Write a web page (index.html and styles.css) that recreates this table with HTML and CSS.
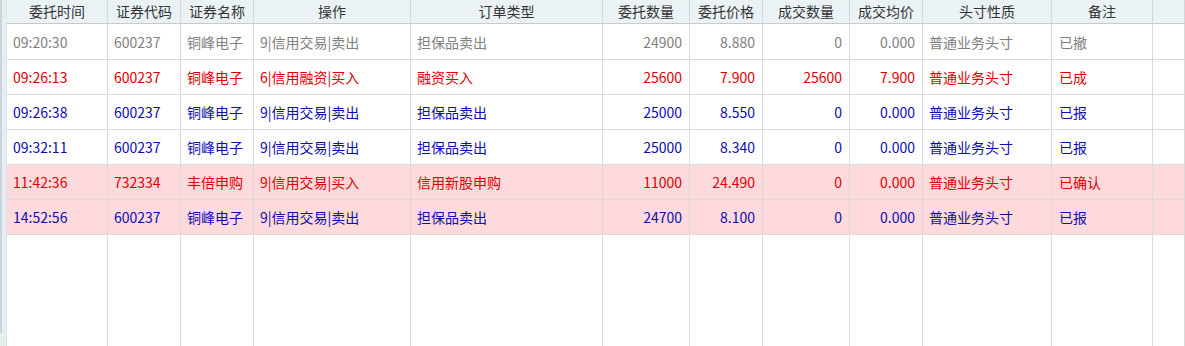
FILE: index.html
```html
<!DOCTYPE html>
<html lang="zh-CN">
<head>
<meta charset="utf-8">
<title>委托查询</title>
<link rel="stylesheet" href="styles.css">
</head>
<body>
<div class="page">
  <div class="side"><div class="side-bar"></div><div class="side-fill"></div></div>
  <div class="grid">
    <div class="h">委托时间</div><div class="h">证券代码</div><div class="h">证券名称</div><div class="h">操作</div><div class="h">订单类型</div><div class="h">委托数量</div><div class="h">委托价格</div><div class="h">成交数量</div><div class="h">成交均价</div><div class="h">头寸性质</div><div class="h">备注</div><div class="h"></div>

    <div class="c gray">09:20:30</div><div class="c gray">600237</div><div class="c gray">铜峰电子</div><div class="c gray">9|信用交易|卖出</div><div class="c gray">担保品卖出</div><div class="c r gray">24900</div><div class="c r gray">8.880</div><div class="c r gray">0</div><div class="c r gray">0.000</div><div class="c gray">普通业务头寸</div><div class="c gray n">已撤</div><div class="c"></div>

    <div class="c red">09:26:13</div><div class="c red">600237</div><div class="c red">铜峰电子</div><div class="c red">6|信用融资|买入</div><div class="c red">融资买入</div><div class="c r red">25600</div><div class="c r red">7.900</div><div class="c r red">25600</div><div class="c r red">7.900</div><div class="c red">普通业务头寸</div><div class="c red n">已成</div><div class="c"></div>

    <div class="c blue">09:26:38</div><div class="c blue">600237</div><div class="c blue">铜峰电子</div><div class="c blue">9|信用交易|卖出</div><div class="c blue">担保品卖出</div><div class="c r blue">25000</div><div class="c r blue">8.550</div><div class="c r blue">0</div><div class="c r blue">0.000</div><div class="c blue">普通业务头寸</div><div class="c blue n">已报</div><div class="c"></div>

    <div class="c blue">09:32:11</div><div class="c blue">600237</div><div class="c blue">铜峰电子</div><div class="c blue">9|信用交易|卖出</div><div class="c blue">担保品卖出</div><div class="c r blue">25000</div><div class="c r blue">8.340</div><div class="c r blue">0</div><div class="c r blue">0.000</div><div class="c blue">普通业务头寸</div><div class="c blue n">已报</div><div class="c"></div>

    <div class="c pk red">11:42:36</div><div class="c pk red">732334</div><div class="c pk red">丰倍申购</div><div class="c pk red">9|信用交易|买入</div><div class="c pk red">信用新股申购</div><div class="c pk r red">11000</div><div class="c pk r red">24.490</div><div class="c pk r red">0</div><div class="c pk r red">0.000</div><div class="c pk red">普通业务头寸</div><div class="c pk red n">已确认</div><div class="c pk"></div>

    <div class="c pk blue">14:52:56</div><div class="c pk blue">600237</div><div class="c pk blue">铜峰电子</div><div class="c pk blue">9|信用交易|卖出</div><div class="c pk blue">担保品卖出</div><div class="c pk r blue">24700</div><div class="c pk r blue">8.100</div><div class="c pk r blue">0</div><div class="c pk r blue">0.000</div><div class="c pk blue">普通业务头寸</div><div class="c pk blue n">已报</div><div class="c pk"></div>

    <div class="f"></div><div class="f"></div><div class="f"></div><div class="f"></div><div class="f"></div><div class="f"></div><div class="f"></div><div class="f"></div><div class="f"></div><div class="f"></div><div class="f"></div><div class="f"></div>
  </div>
</div>
</body>
</html>
```
FILE: styles.css
```css
html, body {
  margin: 0;
  padding: 0;
  height: 100%;
  background: #ffffff;
  overflow: hidden;
}
body {
  font-family: "Noto Sans CJK SC", "Noto Sans", "DejaVu Sans", sans-serif;
  font-size: 14px;
}
.page {
  display: flex;
  height: 346px;
}
.side {
  width: 7px;
  display: flex;
  flex-shrink: 0;
  background: #e7eef2;
}
.side-bar {
  width: 2px;
  height: 333px;
  background: #cdd4d9;
}
.side-fill {
  flex: 1;
  border-right: 1px solid #dde4e8;
}
.grid {
  flex: 1;
  display: grid;
  grid-template-columns: 101px 73px 73px 157px 192px 87px 73px 87px 73px 129px 101px 1fr;
  grid-template-rows: 24px 36px repeat(5, 35px) 1fr;
  height: 100%;
}
.h {
  background: #eaf2f5;
  color: #333333;
  border-right: 1px solid #d2d6d9;
  border-bottom: 1px solid #c6cacd;
  display: flex;
  align-items: center;
  justify-content: center;
  line-height: 1;
  padding-bottom: 1px;
  box-sizing: border-box;
}
.c {
  border-right: 1px solid #dadada;
  border-bottom: 1px solid #dadada;
  display: flex;
  align-items: center;
  padding: 0 6px;
  white-space: nowrap;
  box-sizing: border-box;
}
.c.n {
  padding-left: 7px;
}
.c.r {
  justify-content: flex-end;
  padding-right: 7px;
}
.f {
  border-right: 1px solid #dadada;
}
.pk {
  background: #ffdadc;
}
.gray { color: #808080; }
.red { color: #dc0000; }
.blue { color: #0c0cb0; }
```
